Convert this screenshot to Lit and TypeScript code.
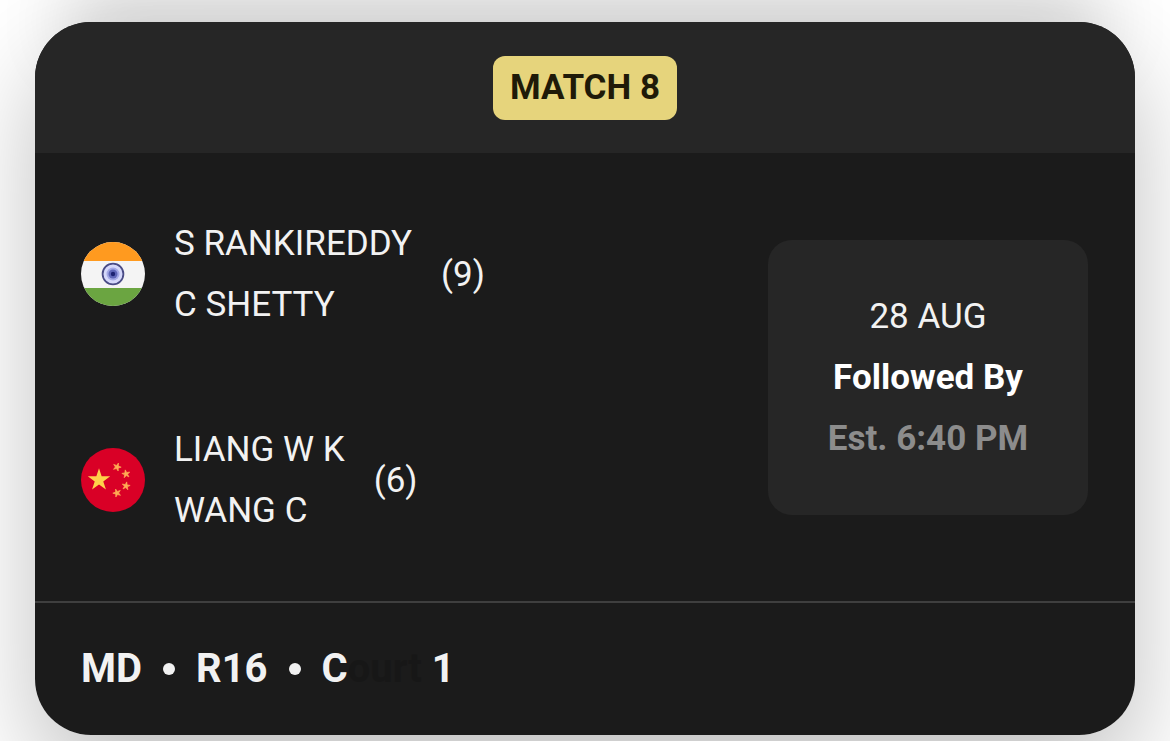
import { LitElement, html, svg, css } from "lit";
import { customElement, property } from "lit/decorators.js";

type Country = "india" | "china";

interface Team {
  country: Country;
  label: string;
  players: string[];
  seed: number;
}

const STAR = "M0 -1L0.225 -0.309L0.951 -0.309L0.363 0.118L0.588 0.809L0 0.382L-0.588 0.809L-0.363 0.118L-0.951 -0.309L-0.225 -0.309Z";

const smallStars = [
  { x: 36, y: 19, turn: 20 },
  { x: 45, y: 26, turn: -10 },
  { x: 45, y: 38, turn: 10 },
  { x: 36, y: 45, turn: -20 },
];

const flags = {
  india: svg`
    <rect width="64" height="64" fill="#f4f4f4"/>
    <rect width="64" height="19" fill="#ff9a1f"/>
    <rect y="46" width="64" height="18" fill="#6ba541"/>
    <circle cx="32" cy="32" r="10.4" fill="#d5d8fa" stroke="#4a4c86" stroke-width="1.8"/>
    <circle cx="32" cy="32" r="6.5" fill="#a3a8e6"/>
    <circle cx="32" cy="32" r="4.5" fill="#5f66b8"/>
    <circle cx="32" cy="32" r="2.2" fill="#1c2272"/>`,
  china: svg`
    <rect width="64" height="64" fill="#d90026"/>
    <path d=${STAR} transform="translate(18 32) scale(11.8)" fill="#ffd04a"/>
    ${smallStars.map(
      (s) => svg`<path d=${STAR} transform="translate(${s.x} ${s.y}) rotate(${s.turn}) scale(4.2)" fill="#ffab55" stroke="#ffab55" stroke-width="0.15"/>`
    )}`,
};

@customElement("country-flag")
class CountryFlag extends LitElement {
  @property() country: Country = "india";
  @property() label = "";

  static styles = css`
    :host {
      display: block;
      flex: none;
      width: 64px;
      height: 64px;
      border-radius: 50%;
      overflow: hidden;
    }
    .flag {
      display: block;
      width: 100%;
      height: 100%;
    }
  `;

  render() {
    return html`<svg class="flag" viewBox="0 0 64 64" role="img" aria-label=${this.label}>${flags[this.country]}</svg>`;
  }
}

@customElement("app-root")
class AppRoot extends LitElement {
  teams: Team[] = [
    { country: "india", label: "India", players: ["S RANKIREDDY", "C SHETTY"], seed: 9 },
    { country: "china", label: "China", players: ["LIANG W K", "WANG C"], seed: 6 },
  ];

  static styles = css`
    :host {
      display: block;
      overflow: hidden;
      background: #fff;
      color: #f2f2f2;
      font-family: Roboto, "Liberation Sans", sans-serif;
      font-size: 35px;
      line-height: 61px;
    }
    .list {
      padding: 0 35px 6px;
    }
    .edge {
      height: 0;
      margin: 0 64px 22px;
      box-shadow: 0 0 70px 30px rgba(0, 0, 0, 0.18);
    }
    .card {
      position: relative;
      border-radius: 56px;
      overflow: hidden;
      background: #1b1b1b;
    }
    .shade {
      border-radius: 56px;
      box-shadow: 0 40px 100px rgba(0, 0, 0, 0.25);
    }
    .head {
      display: flex;
      justify-content: center;
      padding: 34px 0 33px;
      background: #262626;
    }
    .badge {
      margin: 0;
      padding: 0 17px;
      border-radius: 12px;
      background: #e6d47c;
      color: #1f1a08;
      font-size: 35px;
      font-weight: 700;
      line-height: 64px;
    }
    .body {
      display: flex;
      align-items: center;
      justify-content: space-between;
      padding: 60px 47px 60px 46px;
    }
    .teams {
      display: grid;
      gap: 84px;
    }
    .team {
      display: flex;
      align-items: center;
    }
    .players {
      margin: 0 29px;
    }
    .when {
      box-sizing: border-box;
      width: 320px;
      padding: 46px 0;
      border-radius: 24px;
      background: #262626;
      text-align: center;
    }
    .strong {
      color: #fff;
      font-weight: 700;
    }
    .muted {
      color: #8c8c8c;
      font-weight: 700;
    }
    .foot {
      display: flex;
      align-items: center;
      padding: 35px 46px 36px;
      border-top: 2px solid #3f3f3f;
      font-size: 40px;
      font-weight: 700;
    }
    .dot {
      width: 12px;
      height: 12px;
      margin: 0 21px;
      border-radius: 50%;
      background: #f2f2f2;
    }
    .faded {
      color: #171717;
    }
  `;

  render() {
    return html`
      <main class="list">
        <div class="edge"></div>
        <div class="shade">
          <article class="card">
            <header class="head"><h1 class="badge">MATCH 8</h1></header>
            <section class="body">
              <div class="teams">
                ${this.teams.map(
                  (t) => html`
                    <div class="team">
                      <country-flag .country=${t.country} .label=${t.label}></country-flag>
                      <div class="players">${t.players.map((p) => html`<div>${p}</div>`)}</div>
                      <div>(${t.seed})</div>
                    </div>
                  `
                )}
              </div>
              <div class="when">
                <div>28 AUG</div>
                <div class="strong">Followed By</div>
                <div class="muted">Est. 6:40 PM</div>
              </div>
            </section>
            <footer class="foot">
              <span>MD</span><span class="dot"></span><span>R16</span><span class="dot"></span>
              <span>C<span class="faded">ourt</span> 1</span>
            </footer>
          </article>
        </div>
      </main>
    `;
  }
}
